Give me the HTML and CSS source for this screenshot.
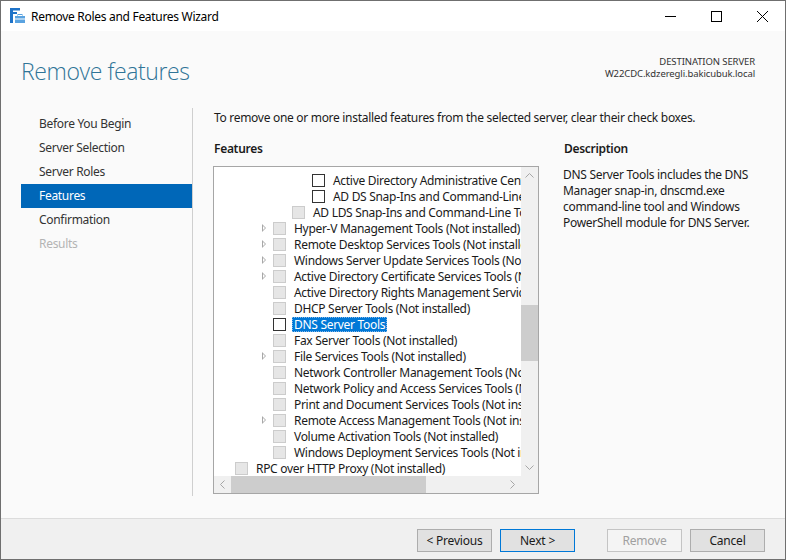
FILE: index.html
```html
<!DOCTYPE html>
<html lang="en">
<head>
  <meta charset="UTF-8" />
  <title>Remove Roles and Features Wizard</title>
  <link rel="stylesheet" href="styles.css">
</head>
<body>
  <div class="window">
    <div class="titlebar">
      <svg class="app-icon" width="16" height="16" viewBox="0 0 16 16">
        <rect x="0" y="0" width="3" height="15" fill="#1e73c8"/>
        <rect x="0" y="0" width="10" height="2.5" fill="#1e73c8"/>
        <rect x="0" y="4" width="7" height="2" fill="#1e73c8"/>
        <rect x="5" y="8" width="10" height="7" fill="#5aa3e0"/>
        <rect x="8" y="6.5" width="4" height="2" fill="none" stroke="#5aa3e0" stroke-width="1"/>
        <rect x="5" y="10.5" width="10" height="1" fill="#ffffff"/>
      </svg>
      <span class="title">Remove Roles and Features Wizard</span>
      <div class="controls">
        <svg width="46" height="30" viewBox="0 0 46 30"><line x1="18" y1="15.5" x2="29" y2="15.5" stroke="#000" stroke-width="1"/></svg>
        <svg width="46" height="30" viewBox="0 0 46 30"><rect x="18.5" y="10.5" width="10" height="10" fill="none" stroke="#000" stroke-width="1"/></svg>
        <svg width="46" height="30" viewBox="0 0 46 30"><path d="M18 10 L29 21 M29 10 L18 21" stroke="#000" stroke-width="1"/></svg>
      </div>
    </div>

    <div class="main">
      <div class="header">
        <h1>Remove features</h1>
        <div class="dest">
          <div>DESTINATION SERVER</div>
          <div>W22CDC.kdzeregli.bakicubuk.local</div>
        </div>
      </div>

      <div class="body">
        <ul class="nav">
          <li>Before You Begin</li>
          <li>Server Selection</li>
          <li>Server Roles</li>
          <li class="active">Features</li>
          <li>Confirmation</li>
          <li class="disabled">Results</li>
        </ul>

        <div class="content">
          <p class="intro">To remove one or more installed features from the selected server, clear their check boxes.</p>
          <div class="columns">
            <div class="features">
              <div class="label">Features</div>
              <div class="tree">
                <div class="rows">
                  <div class="row lv4"><span class="exp"></span><span class="cb on"></span><span class="txt">Active Directory Administrative Center</span></div>
                  <div class="row lv4"><span class="exp"></span><span class="cb on"></span><span class="txt">AD DS Snap-Ins and Command-Line Tools</span></div>
                  <div class="row lv3"><span class="exp"></span><span class="cb"></span><span class="txt">AD LDS Snap-Ins and Command-Line Tools</span></div>
                  <div class="row lv2"><span class="exp arrow"></span><span class="cb"></span><span class="txt">Hyper-V Management Tools (Not installed)</span></div>
                  <div class="row lv2"><span class="exp arrow"></span><span class="cb"></span><span class="txt">Remote Desktop Services Tools (Not installed)</span></div>
                  <div class="row lv2"><span class="exp arrow"></span><span class="cb"></span><span class="txt">Windows Server Update Services Tools (Not installed)</span></div>
                  <div class="row lv2"><span class="exp arrow"></span><span class="cb"></span><span class="txt">Active Directory Certificate Services Tools (Not installed)</span></div>
                  <div class="row lv2"><span class="exp"></span><span class="cb"></span><span class="txt">Active Directory Rights Management Services Tools (Not installed)</span></div>
                  <div class="row lv2"><span class="exp"></span><span class="cb"></span><span class="txt">DHCP Server Tools (Not installed)</span></div>
                  <div class="row lv2"><span class="exp"></span><span class="cb on"></span><span class="txt selected">DNS Server Tools</span></div>
                  <div class="row lv2"><span class="exp"></span><span class="cb"></span><span class="txt">Fax Server Tools (Not installed)</span></div>
                  <div class="row lv2"><span class="exp arrow"></span><span class="cb"></span><span class="txt">File Services Tools (Not installed)</span></div>
                  <div class="row lv2"><span class="exp"></span><span class="cb"></span><span class="txt">Network Controller Management Tools (Not installed)</span></div>
                  <div class="row lv2"><span class="exp"></span><span class="cb"></span><span class="txt">Network Policy and Access Services Tools (Not installed)</span></div>
                  <div class="row lv2"><span class="exp"></span><span class="cb"></span><span class="txt">Print and Document Services Tools (Not installed)</span></div>
                  <div class="row lv2"><span class="exp arrow"></span><span class="cb"></span><span class="txt">Remote Access Management Tools (Not installed)</span></div>
                  <div class="row lv2"><span class="exp"></span><span class="cb"></span><span class="txt">Volume Activation Tools (Not installed)</span></div>
                  <div class="row lv2"><span class="exp"></span><span class="cb"></span><span class="txt">Windows Deployment Services Tools (Not installed)</span></div>
                  <div class="row lv0"><span class="exp"></span><span class="cb"></span><span class="txt">RPC over HTTP Proxy (Not installed)</span></div>
                </div>
                <div class="vscroll">
                  <div class="sbtn"><svg width="9" height="5" viewBox="0 0 9 5"><polyline points="0.5,4.5 4.5,0.5 8.5,4.5" fill="none" stroke="#a6a6a6"/></svg></div>
                  <div class="track"><div class="thumb"></div></div>
                  <div class="sbtn"><svg width="9" height="5" viewBox="0 0 9 5"><polyline points="0.5,0.5 4.5,4.5 8.5,0.5" fill="none" stroke="#a6a6a6"/></svg></div>
                </div>
                <div class="hscroll">
                  <div class="sbtn"><svg width="5" height="9" viewBox="0 0 5 9"><polyline points="4.5,0.5 0.5,4.5 4.5,8.5" fill="none" stroke="#a6a6a6"/></svg></div>
                  <div class="track"><div class="thumb"></div></div>
                  <div class="sbtn"><svg width="5" height="9" viewBox="0 0 5 9"><polyline points="0.5,0.5 4.5,4.5 0.5,8.5" fill="none" stroke="#a6a6a6"/></svg></div>
                </div>
                <div class="corner"></div>
              </div>
            </div>

            <div class="description">
              <div class="label">Description</div>
              <p>DNS Server Tools includes the DNS Manager snap-in, dnscmd.exe command-line tool and Windows PowerShell module for DNS Server.</p>
            </div>
          </div>
        </div>
      </div>

      <div class="footer">
        <button class="btn">&lt; Previous</button>
        <button class="btn default">Next &gt;</button>
        <button class="btn wide-gap" disabled>Remove</button>
        <button class="btn">Cancel</button>
      </div>
    </div>
  </div>
</body>
</html>
```

FILE: styles.css
```css
:root {
  --font: 'Noto Sans', 'Open Sans', sans-serif;
  --accent: #0067b8;
  --select: #0078d7;
}

body {
  margin: 0;
  font-family: var(--font);
  font-size: 12px;
  letter-spacing: -0.3px;
  color: #1a1a1a;
  background: #ffffff;
}

.window {
  width: 786px;
  height: 560px;
  box-sizing: border-box;
  border: 1px solid #6f6f6f;
  display: flex;
  flex-direction: column;
  background: #fafafa;
}

/* Title bar */
.titlebar {
  height: 30px;
  background: #ffffff;
  display: flex;
  align-items: center;
}

.app-icon {
  margin-left: 9px;
  margin-right: 5px;
}

.title {
  font-size: 12px;
  color: #000;
}

.controls {
  margin-left: auto;
  display: flex;
}

.controls svg {
  display: block;
}

/* Main area */
.main {
  flex: 1;
  display: flex;
  flex-direction: column;
}

.header {
  height: 77px;
  display: flex;
  align-items: flex-start;
  justify-content: space-between;
  padding: 0 30px 0 20px;
}

.header h1 {
  margin: 25px 0 0;
  font-family: 'Open Sans', var(--font);
  font-weight: 300;
  font-size: 23px;
  letter-spacing: -0.4px;
  line-height: 30px;
  color: #2f7497;
}

.dest {
  margin-top: 25px;
  text-align: right;
  font-size: 9.5px;
  letter-spacing: -0.1px;
  line-height: 12px;
  color: #333;
}

.body {
  flex: 1;
  display: flex;
}

/* Left nav */
.nav {
  list-style: none;
  margin: 0 0 22px 20px;
  padding: 4px 0 0;
  width: 171px;
  border-right: 1px solid #cfcfcf;
}

.nav li {
  height: 24px;
  line-height: 23px;
  padding-left: 18px;
  color: #333;
}

.nav li.active {
  background: var(--accent);
  color: #fff;
}

.nav li.disabled {
  color: #b4b4b4;
}

/* Content */
.content {
  flex: 1;
  padding-left: 20px;
}

.intro {
  margin: 0;
  padding-left: 1px;
  line-height: 20px;
}

.columns {
  display: flex;
  gap: 24px;
  margin-top: 11px;
}

.label {
  font-weight: 600;
  line-height: 20px;
  padding-left: 1px;
  margin-bottom: 7px;
  color: #1a1a1a;
}

.features {
  width: 326px;
}

.tree {
  height: 328px;
  box-sizing: border-box;
  border: 1px solid #a6a6a6;
  background: #fff;
  display: grid;
  grid-template-columns: 1fr 17px;
  grid-template-rows: 1fr 17px;
}

.rows {
  overflow: hidden;
  padding-top: 5px;
}

.row {
  height: 16px;
  display: flex;
  align-items: center;
  white-space: nowrap;
}

.lv0 { padding-left: 10px; }
.lv2 { padding-left: 48px; }
.lv3 { padding-left: 67px; }
.lv4 { padding-left: 87px; }

.exp {
  width: 11px;
  flex: none;
  height: 16px;
  position: relative;
}

.exp.arrow::after {
  content: '';
  position: absolute;
  left: 0;
  top: 4px;
  border-style: solid;
  border-width: 4px 0 4px 4px;
  border-color: transparent transparent transparent #a8a8a8;
}

.exp.arrow::before {
  content: '';
  position: absolute;
  left: 1px;
  top: 6px;
  border-style: solid;
  border-width: 2px 0 2px 2px;
  border-color: transparent transparent transparent #fff;
  z-index: 1;
}

.cb {
  width: 13px;
  height: 13px;
  box-sizing: border-box;
  flex: none;
  border: 1px solid #cccccc;
  background: #e6e6e6;
}

.cb.on {
  border-color: #333;
  background: #fff;
}

.txt {
  margin-left: 6px;
  padding: 0 2px;
  line-height: 15px;
  color: #1a1a1a;
}

.txt.selected {
  background: var(--select);
  color: #fff;
  outline: 1px dotted #8ab8e6;
  outline-offset: -1px;
}

/* Scrollbars */
.vscroll,
.hscroll {
  background: #f0f0f0;
  display: flex;
}

.vscroll {
  flex-direction: column;
}

.sbtn {
  width: 17px;
  height: 17px;
  flex: none;
  display: flex;
  align-items: center;
  justify-content: center;
}

.vscroll .track,
.hscroll .track {
  flex: 1;
}

.vscroll .thumb {
  margin-top: 121px;
  height: 56px;
  background: #cdcdcd;
}

.hscroll .thumb {
  width: 195px;
  height: 17px;
  background: #cdcdcd;
}

.corner {
  background: #f0f0f0;
}

.description {
  width: 200px;
}

.description p {
  margin: 0;
  line-height: 16px;
  padding-top: 1px;
  color: #1a1a1a;
}

/* Footer */
.footer {
  height: 41px;
  box-sizing: border-box;
  border-top: 1px solid #dcdcdc;
  background: #f0f0f0;
  display: flex;
  justify-content: flex-end;
  align-items: flex-start;
  gap: 8px;
  padding: 10px 20px 0 0;
}

.btn {
  width: 75px;
  height: 23px;
  font-family: var(--font);
  font-size: 12px;
  letter-spacing: -0.2px;
  color: #1a1a1a;
  background: #e1e1e1;
  border: 1px solid #adadad;
  padding: 0;
}

.btn.default {
  border-color: #0078d7;
}

.btn:disabled {
  background: #f4f4f4;
  border-color: #c4c4c4;
  color: #a0a0a0;
}

.btn.wide-gap {
  margin-left: 24px;
}
```
